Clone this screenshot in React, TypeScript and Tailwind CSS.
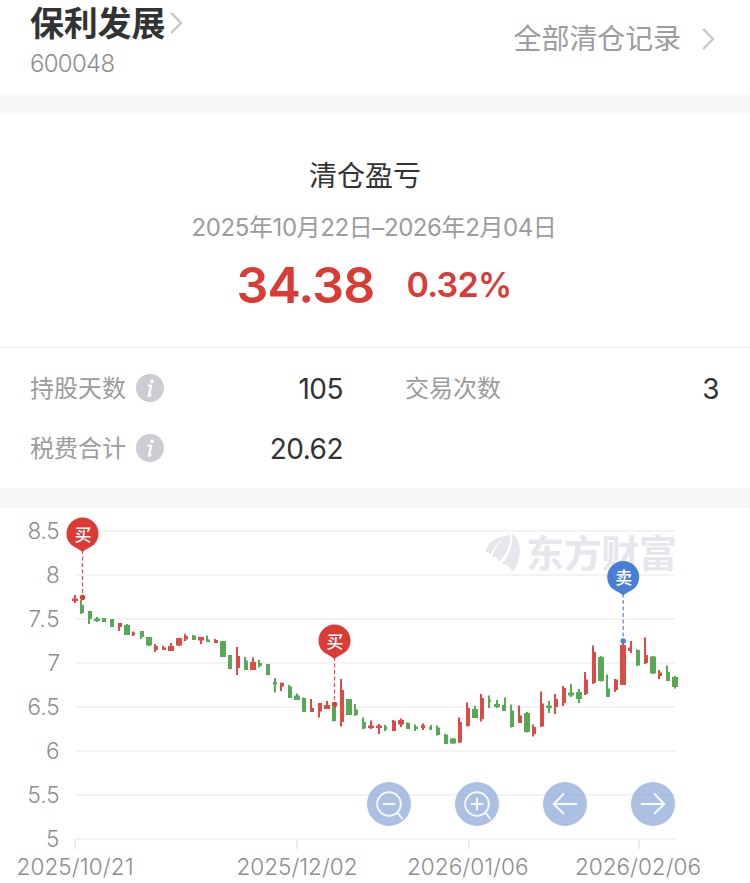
import type { ReactNode } from 'react';

const UP = '#dc4b46';
const DOWN = '#57aa55';

// [direction, bodyX, bodyW, bodyTop, bodyBottom, wickX, wickTop, wickBottom]
type Candle = ['u' | 'd', number, number, number, number, number, number, number];

const CANDLES: Candle[] = [
  ['u', 72, 6, 598.5, 601, 74, 595, 603],
  ['d', 80, 4, 605, 613, 80, 600, 614],
  ['d', 88, 4, 611, 619, 88, 611, 624],
  ['d', 94, 6, 618.5, 621, 96, 617, 622],
  ['d', 102, 4, 618, 622, 102, 618, 622],
  ['d', 110, 4, 619, 627, 110, 619, 627],
  ['u', 118, 4, 623, 627, 118, 623, 631],
  ['d', 124, 6, 625, 635, 126, 624, 635],
  ['u', 132, 3, 632.5, 635, 132, 631.5, 636],
  ['d', 140, 4, 631, 637, 140, 631, 639],
  ['d', 146, 6, 637, 645.5, 148, 637, 646],
  ['u', 154, 4, 646, 650, 154, 644, 652],
  ['u', 162, 4, 647.5, 650, 162, 646, 650],
  ['u', 168, 6, 646, 651, 170, 643, 651],
  ['u', 176, 6, 638, 645.5, 178, 638, 646],
  ['u', 184, 4, 636, 639.5, 184, 634, 641],
  ['d', 192, 4, 635.5, 640, 192, 635, 640],
  ['u', 198, 6, 637, 640.5, 200, 637, 644],
  ['d', 206, 4, 639.5, 642, 206, 635.5, 642],
  ['u', 214, 4, 640, 643, 214, 639, 643],
  ['d', 220, 6, 641, 657, 222, 641, 657],
  ['d', 228, 4, 655, 669, 228, 655, 669],
  ['u', 236, 4, 656, 668, 236, 647, 675],
  ['d', 244, 4, 660.5, 670, 244, 657, 670],
  ['u', 250, 6, 662, 670, 252, 657.5, 670],
  ['d', 258, 4, 663, 666, 258, 660, 667.5],
  ['d', 266, 4, 664, 675, 266, 664, 675],
  ['d', 273, 4, 682, 684.5, 274, 678, 692.5],
  ['u', 280, 4, 683, 686.5, 280, 682.5, 691],
  ['d', 288, 4, 686.5, 698, 288, 685, 698],
  ['d', 294, 6, 695.5, 700, 296, 693.5, 700],
  ['d', 302, 4, 698, 712, 302, 697.5, 712],
  ['u', 310, 4, 708, 712, 310, 699, 712],
  ['u', 318, 4, 703, 711.5, 318, 703, 717.5],
  ['u', 324, 6, 705, 709, 326, 701, 709],
  ['d', 332, 4, 707, 721, 332, 707, 721.5],
  ['u', 340, 4, 690, 722, 340, 679, 726.5],
  ['d', 346, 6, 699, 715, 348, 699, 715],
  ['d', 354, 4, 709.5, 715, 354, 704, 716],
  ['d', 362, 4, 722, 728.5, 362, 717.5, 729],
  ['u', 368, 6, 725.5, 728, 370, 720.5, 729],
  ['u', 376, 6, 725.5, 728, 378, 724, 734],
  ['d', 384, 3, 726.5, 729.5, 384, 725, 731],
  ['u', 392, 4, 721, 731, 392, 720, 731],
  ['u', 398, 6, 720, 724.5, 400, 718.5, 727],
  ['d', 406, 4, 723, 729, 406, 722.5, 729],
  ['d', 414, 4, 726.5, 729, 414, 724.5, 731],
  ['u', 421, 4, 725, 728, 422, 723.5, 730],
  ['d', 429, 3, 727, 729.5, 430, 725, 730],
  ['d', 436, 4, 727.5, 735, 436, 725.5, 735.5],
  ['d', 444, 4, 734.5, 744, 444, 734, 744],
  ['d', 450, 6, 738.5, 743.5, 452, 738, 744],
  ['u', 458, 4, 722, 742.5, 458, 717.5, 743],
  ['u', 466, 4, 708, 726, 466, 702.5, 726.5],
  ['d', 472, 6, 709, 718, 474, 706, 718],
  ['u', 480, 4, 698, 719, 480, 694, 721.5],
  ['d', 488, 3, 700, 702, 488, 695.5, 708],
  ['d', 494, 6, 704, 707, 496, 700, 708],
  ['d', 502, 4, 705, 711, 504, 697.5, 711],
  ['d', 510, 4, 710.5, 727, 510, 704.5, 727.5],
  ['u', 518, 4, 715.5, 723, 518, 705.5, 723],
  ['d', 524, 6, 713, 732, 526, 712, 732.5],
  ['u', 532, 4, 727, 734, 532, 724.5, 736.5],
  ['u', 540, 4, 703.5, 726.5, 540, 691.5, 727],
  ['d', 546, 6, 705.5, 708, 548, 701, 713],
  ['u', 554, 4, 699, 707, 554, 694, 714],
  ['u', 562, 4, 688, 703, 562, 686, 706],
  ['d', 568, 6, 692.5, 695.5, 570, 684, 697],
  ['d', 576, 6, 692, 699, 578, 689, 703],
  ['u', 584, 4, 679.5, 694, 584, 672, 695],
  ['u', 592, 4, 652, 683, 592, 645.5, 684],
  ['d', 598, 6, 657, 681, 600, 656, 681.5],
  ['d', 606, 4, 688.5, 697, 606, 674.5, 697],
  ['u', 614, 4, 679.5, 690, 614, 679, 692],
  ['u', 620, 6, 645, 685, 622, 641, 685],
  ['u', 628, 4, 647.5, 651, 630, 641, 653],
  ['d', 636, 4, 650, 665.5, 636, 649.5, 666],
  ['u', 644, 4, 655, 663, 644, 637.5, 664],
  ['d', 650, 6, 656.5, 673.5, 652, 656, 674],
  ['u', 658, 4, 672.5, 676, 658, 670, 679],
  ['d', 666, 4, 672, 681, 666, 665.5, 681],
  ['d', 672, 6, 677, 687, 674, 676, 688.5],
];

const PRICES = [
  { label: '8.5', y: 531, w: 32 },
  { label: '8', y: 575, w: 13.5 },
  { label: '7.5', y: 619, w: 31 },
  { label: '7', y: 663, w: 12 },
  { label: '6.5', y: 707, w: 32 },
  { label: '6', y: 751, w: 13.5 },
  { label: '5.5', y: 795, w: 32 },
  { label: '5', y: 839, w: 13.5 },
];

const DATES = [
  { label: '2025/10/21', x: 16.5, w: 117, tick: 75 },
  { label: '2025/12/02', x: 236.5, w: 121, tick: 297 },
  { label: '2026/01/06', x: 407, w: 121.5, tick: 469 },
  { label: '2026/02/06', x: 575, w: 126, tick: 639 },
];

const MARKERS = [
  { label: '买', x: 82.5, y: 534, dot: 597.5, color: '#dc3a34' },
  { label: '买', x: 334.5, y: 641, dot: 704.5, color: '#dc3a34' },
  { label: '卖', x: 623.2, y: 577.5, dot: 641, color: '#477ed6' },
];

function Chevron({ className }: { className: string }) {
  return (
    <svg className={className} width="13" height="24" viewBox="0 0 13 24" fill="none" stroke="#c8c8c8" strokeWidth="2.4">
      <path d="M1.2 1.8 11 12 1.2 22.2" />
    </svg>
  );
}

function InfoIcon() {
  return (
    <svg width="28" height="28" viewBox="0 0 28 28" className="ml-[10px]">
      <circle cx="14" cy="14" r="14" fill="#cccdd2" />
      <circle cx="16" cy="7.4" r="1.8" fill="#fff" />
      <path d="M12.4 11.5H15.2L12.9 21.5" fill="none" stroke="#fff" strokeWidth="2.2" strokeLinejoin="round" strokeLinecap="round" />
      <path d="M12.4 22.2Q14 22.4 15.2 20.8" fill="none" stroke="#fff" strokeWidth="1.3" strokeLinecap="round" />
    </svg>
  );
}

function Label({ children }: { children: ReactNode }) {
  return <span className="mt-[2px] text-[24px] leading-[28px] tracking-normal text-[#9c9c9c]">{children}</span>;
}

function Header() {
  return (
    <header className="flex h-[94px] justify-between pl-[30px] pr-[35px]">
      <div>
        <div className="flex h-[46px] items-center">
          <h1 className="mt-[2px] text-[34px] font-bold leading-[46px] tracking-[-0.2px] text-[#333]">保利发展</h1>
          <Chevron className="ml-[5px]" />
        </div>
        <p className="mt-[3px] text-[24px] font-light leading-[30px] tracking-[-0.7px] text-[#8e8e8e]">600048</p>
      </div>
      <div className="flex h-[78px] items-center">
        <span className="text-[28px] leading-[40px] tracking-[-0.1px] text-[#9c9c9c]">全部清仓记录</span>
        <Chevron className="ml-[21px]" />
      </div>
    </header>
  );
}

function Summary() {
  return (
    <section className="flex h-[234px] flex-col items-center border-b border-[#ececec] pt-[42px]">
      <h2 className="mr-[20px] text-[28px] leading-[40px] text-[#333]">清仓盈亏</h2>
      <p className="mr-[2px] mt-[15px] whitespace-nowrap text-[24px] leading-[34px] tracking-[-0.4px] text-[#9c9c9c]">
        2025年10月22日–2026年2月04日
      </p>
      <div className="mr-[2px] mt-[10px] flex h-[60px] items-center text-[#da3b35]">
        <span className="text-[50px] font-semibold leading-[60px] tracking-[-0.8px]">34.38</span>
        <span className="ml-[32px] text-[34px] font-semibold leading-[60px] tracking-[-0.7px]">0.32%</span>
      </div>
    </section>
  );
}

function Stats() {
  return (
    <section className="grid h-[140px] grid-cols-2 content-start gap-y-[20px] pt-[20px] text-[28px] leading-[40px] tracking-[-0.5px] text-[#333]">
      <div className="flex h-[40px] items-center pl-[30px] pr-[32px]">
        <Label>持股天数</Label>
        <InfoIcon />
        <span className="ml-auto mt-px">105</span>
      </div>
      <div className="flex h-[40px] items-center pl-[30px] pr-[31px]">
        <Label>交易次数</Label>
        <span className="ml-auto mt-px">3</span>
      </div>
      <div className="flex h-[40px] items-center pl-[30px] pr-[32px]">
        <Label>税费合计</Label>
        <InfoIcon />
        <span className="ml-auto mt-px">20.62</span>
      </div>
    </section>
  );
}

function Watermark() {
  return (
    <g fill="#e6e6ec">
      <path d="M485 552C488 541 498 536.5 509 535.5C500 540 493 547 490.5 555C489 552 487 551 485 552Z" />
      <path d="M492 557C495 547 502 538 510.500 534C510.500 545 506 555 499 562C498.500 558 496 556 492 557Z" />
      <path d="M512 533.5C522 541 523 558 512 572.5C511 567 507 564 502 564C509 556 513 546 512 533.5Z" />
      <text x="526" y="566.5" fontSize="38" fontWeight="700" textLength="151">东方财富</text>
    </g>
  );
}

function Chart() {
  return (
    <svg width="750" height="375" viewBox="0 508 750 375" className="block">
      <g fill="#f3f3f4">
        {PRICES.map(p => <rect key={p.label} x="75" y={p.y - 1} width="600" height="2" />)}
        {DATES.map(d => <rect key={d.label} x={d.tick - 1} y="839" width="2" height="10" fill="#ececec" />)}
      </g>
      <Watermark />
      <g fill="#8e8e8e" fontSize="22.5" fontWeight="300">
        {PRICES.map(p => (
          <text key={p.label} x={59.5 - p.w} y={p.y + 8} textLength={p.w}>{p.label}</text>
        ))}
        {DATES.map(d => (
          <text key={d.label} x={d.x} y="875" textLength={d.w}>{d.label}</text>
        ))}
      </g>
      {CANDLES.map(([dir, x, w, top, bottom, wx, wTop, wBottom]) => (
        <g key={x} fill={dir === 'u' ? UP : DOWN}>
          <rect x={wx} y={wTop} width="2" height={wBottom - wTop} />
          <rect x={x} y={top} width={w} height={bottom - top} />
        </g>
      ))}
      {MARKERS.map(m => (
        <g key={m.x} fill={m.color}>
          <path d={`M${m.x} ${m.y + 16}V${m.dot}`} stroke={m.color} strokeWidth="1.2" strokeDasharray="4 2.5" opacity="0.9" />
          <circle cx={m.x} cy={m.dot} r="2.7" />
          <path
            transform={`translate(${m.x} ${m.y})`}
            d="M0 18C-2.5 15.5-7.5 13.8-11.3 10.8A16 16 0 1 1 11.3 10.8C7.5 13.8 2.5 15.5 0 18Z"
          />
          <text x={m.x + 0.5} y={m.y + 6.5} fontSize="17" fontWeight="500" textAnchor="middle" fill="#fff">{m.label}</text>
        </g>
      ))}
      <g fill="none" stroke="#fff" strokeWidth="2" strokeLinecap="round">
        {[389, 477, 565, 653].map(x => (
          <circle key={x} cx={x} cy="804" r="22" fill="#7a9cd2" fillOpacity="0.63" stroke="none" />
        ))}
        <g opacity="0.9">
          <path d="M383.5 804h11M397.3 812.5 402 818.5" />
          <circle cx="389" cy="804" r="11.8" />
          <path d="M471.5 804h11M477 798.5v11M485.3 812.5 490 818.5" />
          <circle cx="477" cy="804" r="11.8" />
          <path d="M576.5 804H554M563.5 794 553.7 804 563.5 813.5" />
          <path d="M641.5 804H664M654.5 794 664.3 804 654.5 813.5" />
        </g>
      </g>
    </svg>
  );
}

export default function App() {
  return (
    <div className="h-[883px] w-[750px] overflow-hidden bg-white font-['Inter','Noto_Sans_CJK_SC',sans-serif]">
      <Header />
      <div className="h-[20px] bg-[#f7f7f7]" />
      <Summary />
      <Stats />
      <div className="h-[20px] bg-[#f7f7f7]" />
      <Chart />
    </div>
  );
}
